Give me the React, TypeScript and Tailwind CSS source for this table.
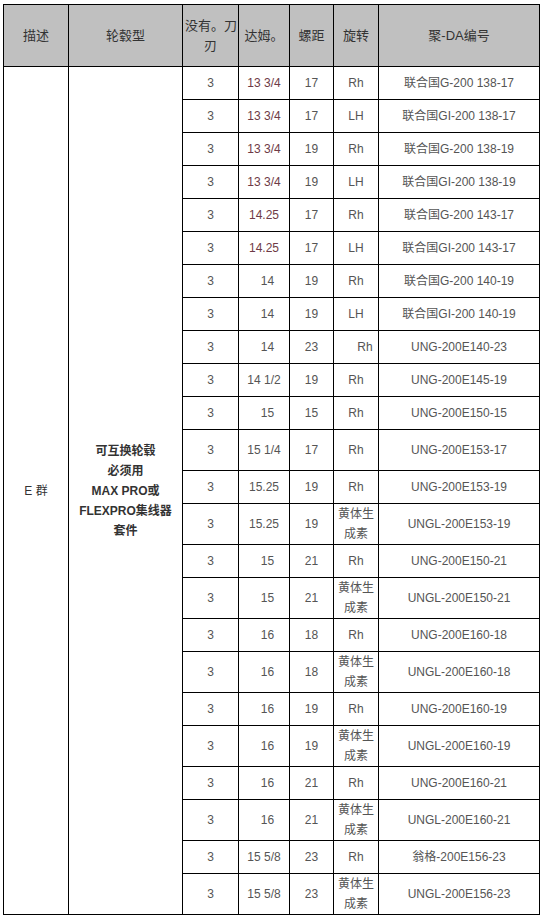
type Row = {
  teeth: string;
  dia: string;
  pitch: string;
  rot: string;
  part: string;
  tall?: boolean;
};

const rows: Row[] = [
  { teeth: "3", dia: "13 3/4", pitch: "17", rot: "Rh", part: "联合国G-200 138-17" },
  { teeth: "3", dia: "13 3/4", pitch: "17", rot: "LH", part: "联合国GI-200 138-17" },
  { teeth: "3", dia: "13 3/4", pitch: "19", rot: "Rh", part: "联合国G-200 138-19" },
  { teeth: "3", dia: "13 3/4", pitch: "19", rot: "LH", part: "联合国GI-200 138-19" },
  { teeth: "3", dia: "14.25", pitch: "17", rot: "Rh", part: "联合国G-200 143-17" },
  { teeth: "3", dia: "14.25", pitch: "17", rot: "LH", part: "联合国GI-200 143-17" },
  { teeth: "3", dia: "14", pitch: "19", rot: "Rh", part: "联合国G-200 140-19" },
  { teeth: "3", dia: "14", pitch: "19", rot: "LH", part: "联合国GI-200 140-19" },
  { teeth: "3", dia: "14", pitch: "23", rot: "Rh", part: "UNG-200E140-23" },
  { teeth: "3", dia: "14 1/2", pitch: "19", rot: "Rh", part: "UNG-200E145-19" },
  { teeth: "3", dia: "15", pitch: "15", rot: "Rh", part: "UNG-200E150-15" },
  { teeth: "3", dia: "15 1/4", pitch: "17", rot: "Rh", part: "UNG-200E153-17", tall: true },
  { teeth: "3", dia: "15.25", pitch: "19", rot: "Rh", part: "UNG-200E153-19" },
  { teeth: "3", dia: "15.25", pitch: "19", rot: "黄体生成素", part: "UNGL-200E153-19" },
  { teeth: "3", dia: "15", pitch: "21", rot: "Rh", part: "UNG-200E150-21" },
  { teeth: "3", dia: "15", pitch: "21", rot: "黄体生成素", part: "UNGL-200E150-21" },
  { teeth: "3", dia: "16", pitch: "18", rot: "Rh", part: "UNG-200E160-18" },
  { teeth: "3", dia: "16", pitch: "18", rot: "黄体生成素", part: "UNGL-200E160-18" },
  { teeth: "3", dia: "16", pitch: "19", rot: "Rh", part: "UNG-200E160-19" },
  { teeth: "3", dia: "16", pitch: "19", rot: "黄体生成素", part: "UNGL-200E160-19" },
  { teeth: "3", dia: "16", pitch: "21", rot: "Rh", part: "UNG-200E160-21" },
  { teeth: "3", dia: "16", pitch: "21", rot: "黄体生成素", part: "UNGL-200E160-21" },
  { teeth: "3", dia: "15 5/8", pitch: "23", rot: "Rh", part: "翁格-200E156-23" },
  { teeth: "3", dia: "15 5/8", pitch: "23", rot: "黄体生成素", part: "UNGL-200E156-23" },
];

const cell = "border border-black px-[2px] py-0 text-center align-middle";

function diaClass(dia: string) {
  if (dia === "13 3/4" || dia === "14.25") return "text-[#6e3a46]";
  if (/^\d\d$/.test(dia)) return "pl-[9px]";
  return "";
}

export default function App() {
  return (
    <div className="min-h-[920px] bg-white pt-[4px] pl-[3px] font-['Liberation_Sans','Noto_Sans_CJK_SC',sans-serif]">
      <table className="w-[536px] table-fixed border-collapse text-[12px] leading-[20px] text-[#555]">
        <colgroup>
          <col className="w-[65px]" />
          <col className="w-[114px]" />
          <col className="w-[56px]" />
          <col className="w-[51px]" />
          <col className="w-[44px]" />
          <col className="w-[45px]" />
          <col className="w-[161px]" />
        </colgroup>
        <thead>
          <tr className="h-[62px] bg-[#c0c0c0] text-[13px] text-[#333]">
            <th className={`${cell} font-normal`}>描述</th>
            <th className={`${cell} font-normal`}>轮毂型</th>
            <th className={`${cell} px-0 font-normal whitespace-nowrap`}>
              没有。刀
              <br />
              刃
            </th>
            <th className={`${cell} font-normal`}>达姆。</th>
            <th className={`${cell} font-normal`}>螺距</th>
            <th className={`${cell} font-normal`}>旋转</th>
            <th className={`${cell} font-normal`}>聚-DA编号</th>
          </tr>
        </thead>
        <tbody>
          {rows.map((r, i) => (
            <tr key={i} className={r.tall ? "h-[41px]" : "h-[33px]"}>
              {i === 0 && (
                <>
                  <td rowSpan={rows.length} className={`${cell} text-[#333]`}>
                    E 群
                  </td>
                  <td rowSpan={rows.length} className={`${cell} font-bold text-[#333]`}>
                    可互换轮毂
                    <br />
                    必须用
                    <br />
                    MAX PRO或
                    <br />
                    FLEXPRO集线器
                    <br />
                    套件
                  </td>
                </>
              )}
              <td className={cell}>{r.teeth}</td>
              <td className={`${cell} ${diaClass(r.dia)}`}>{r.dia}</td>
              <td className={cell}>{r.pitch}</td>
              <td className={`${cell} ${i === 8 ? "pl-[20px]" : ""}`}>{r.rot}</td>
              <td className={cell}>{r.part}</td>
            </tr>
          ))}
        </tbody>
      </table>
    </div>
  );
}
